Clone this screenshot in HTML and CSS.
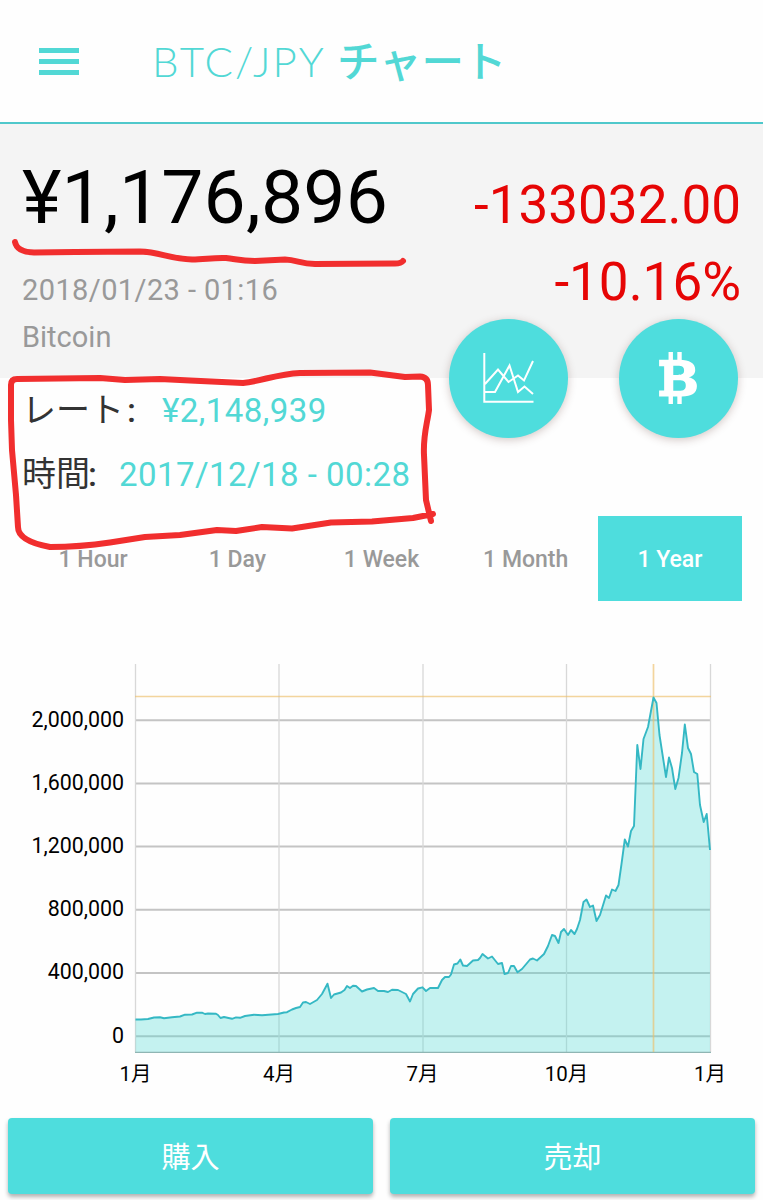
FILE: index.html
```html
<!DOCTYPE html>
<html lang="ja">

<head>
    <meta charset="UTF-8">
    <meta name="viewport" content="width=device-width, initial-scale=1.0">
    <title>BTC/JPY チャート</title>
    <link rel="stylesheet" href="styles.css">
</head>

<body>

    <header class="header">
        <div class="menu">
            <span></span>
            <span></span>
            <span></span>
        </div>
        <h1 class="title"><span class="pair">BTC/JPY</span><span class="kana">チャート</span></h1>
    </header>

    <section class="summary">
        <div class="current">
            <div class="price">¥1,176,896</div>
            <div class="info date">2018/01/23 - 01:16</div>
            <div class="info">Bitcoin</div>
        </div>
        <div class="change">
            <div>-133032.00</div>
            <div>-10.16%</div>
        </div>
        <div class="actions">
            <div class="circle">
                <svg class="icon-chart" viewBox="0 0 52 52">
                    <path d="M2.3 1V49.7H51.5M3 32L16 17.5L26.5 30L36 23.5L42 28.5L51 9M2.3 40H13L27.5 13.5L36 40L42.5 34.5L51 42" />
                </svg>
            </div>
            <div class="circle">
                <svg class="icon-btc" viewBox="0 0 112 154">
                    <path fill-rule="evenodd" d="M0 23H60C91 23 107 34 107 53C107 66 98 72 88 75C102 79 112 87 112 101C112 122 96 132 68 132H0V114H15V42H0ZM42 41V68H54C70 68 74 64 74 55C74 45 69 41 54 41ZM42 84V115H58C74 115 79 110 79 99C79 88 73 84 58 84Z" />
                    <path d="M28 0H41V24H28ZM54 0H67V24H54ZM28 130H41V154H28ZM54 130H67V154H54Z" />
                </svg>
            </div>
        </div>
    </section>

    <section class="rates">
        <div class="rate"><span class="label">レート<i>:</i></span><span class="value">¥2,148,939</span></div>
        <div class="rate time"><span class="label">時間<i>:</i></span><span class="value">2017/12/18 - 00:28</span></div>
    </section>

    <nav class="tabs">
        <div class="tab">1 Hour</div>
        <div class="tab">1 Day</div>
        <div class="tab">1 Week</div>
        <div class="tab">1 Month</div>
        <div class="tab active">1 Year</div>
    </nav>

    <svg class="chart" viewBox="0 650 763 450">
        <path class="grid" d="M135 720.2H710M135 783.5H710M135 846.6H710M135 909.8H710M135 973H710M135 1036.3H710" />
        <path class="grid-v" d="M135.5 664V1052M279 664V1052M423 664V1052M566.5 664V1052M710.5 664V1052" />
        <path class="area" id="area" />
        <path class="axis" d="M135 1052.3H711" />
        <path class="cross" d="M135 696.5H711M653.5 664V1052" />
        <path class="line" id="line" />
        <g class="y-labels">
            <text x="124" y="727">2,000,000</text>
            <text x="124" y="790">1,600,000</text>
            <text x="124" y="853">1,200,000</text>
            <text x="124" y="916">800,000</text>
            <text x="124" y="979">400,000</text>
            <text x="124" y="1043">0</text>
        </g>
        <g class="x-labels">
            <text x="135.5" y="1081">1月</text>
            <text x="279" y="1081">4月</text>
            <text x="422.5" y="1081">7月</text>
            <text x="566.5" y="1081">10月</text>
            <text x="710" y="1081">1月</text>
        </g>
    </svg>

    <div class="buttons">
        <div class="btn">購入</div>
        <div class="btn">売却</div>
    </div>

    <!-- red marker strokes -->
    <svg class="marker" viewBox="0 0 763 1200">
        <path d="M15 242Q17 252 34 252.5L75 252L140 251.5C160 252 170 259 192 259.5C205 259.5 212 257.5 226 258C236 259 240 261 255 261L285 259.5C297 260 300 263.5 315 264L395 263.5Q401 263.5 403 261" />
        <path d="M433 514L413 518L372 521.5L331 522.5L292 528.5L262 527L236 531L217 530L180 535L145 537L110 542.5Q80 547 50 547Q18 541 18 527L16 495L12 450L11 420V385Q11 379 17 379L100 378L125 380L160 379L190 380.5L243 383C262 381 277 374 300 373L370 372.5L405 377L420 376.5Q428 377 428 385L429 410C427 425 423 435 424 455L426 500L431 521" />
    </svg>

    <script>
        let points = [
            [135.5, 1019.5], [141, 1019.5], [148, 1019], [154, 1017.5], [160, 1017.3], [164, 1018.2], [172, 1017.3], [180, 1016.5], [185, 1014.7], [192, 1014.5],
            [197, 1012.7], [202, 1012.7], [205, 1014], [208, 1013.5], [216, 1013.8], [218, 1015], [220.5, 1018], [224, 1017], [232, 1018.8], [236, 1017.4],
            [240, 1017.8], [245, 1016], [254, 1014.8], [262, 1015.2], [278, 1014], [284, 1012.5], [287, 1012.2], [292, 1009.5], [296, 1008], [300, 1007],
            [303, 1002.5], [306, 1002], [310, 1004], [317, 1000], [322, 994], [327.5, 983.7], [331, 998], [334, 994.5], [341, 992.5], [344.5, 990],
            [347, 986], [350, 988], [353, 985.7], [356, 986], [362, 991.5], [367, 989.5], [374, 988], [378, 991], [384, 991], [388, 992],
            [392, 989.7], [398, 990], [406, 994], [410, 1001.5], [413, 994], [418, 988.5], [422.5, 987.3], [426, 991], [430, 988], [438, 988],
            [442, 980], [445, 977], [449, 977], [451, 974.5], [454, 964.5], [457.5, 963.5], [460.3, 959.5], [463, 965.5], [467, 966], [473, 960.5],
            [478, 960], [480, 958], [482.5, 954], [488, 958.5], [492, 956.5], [498, 964], [502, 963], [504.5, 974], [508, 973], [511, 966],
            [514, 966], [517.5, 972.3], [522, 969], [530, 959.5], [533, 958.5], [537, 960.5], [544, 954], [548, 946], [552, 935], [555, 936],
            [558.5, 943], [561, 932], [564, 929], [568, 935], [571, 930], [574.5, 934], [577, 929], [580, 920], [583.5, 902], [586.5, 899.5],
            [590, 907], [593, 905.5], [596.5, 921], [600, 915], [606, 895.5], [609, 898], [612, 889.5], [615.5, 891], [618.5, 885], [621.5, 864],
            [624.8, 839.5], [628, 846.5], [631, 831], [634, 826], [637.3, 745], [640.5, 769], [643.5, 739], [648, 727], [653.5, 697.5], [656.5, 703],
            [659.5, 735], [666, 777], [669, 757.5], [672, 768], [675.3, 789], [678.5, 778], [682, 753], [684.8, 724.5], [688, 748], [691, 754],
            [694, 772], [697.3, 774], [700, 805], [703.7, 822], [706.7, 814], [710, 850]
        ]
        let d = "M" + points.map((p) => p.join(" ")).join("L")
        document.querySelector("#line").setAttribute("d", d)
        document.querySelector("#area").setAttribute("d", d + "V1052H135.5Z")
    </script>
</body>

</html>
```
FILE: styles.css
```css
* {
    box-sizing: border-box;
}

body {
    margin: 0;
    height: 1200px;
    overflow: hidden;
    position: relative;
    background-color: #fefefe;
    font-family: Roboto, "Noto Sans CJK JP", sans-serif;
}

.header {
    display: flex;
    align-items: center;
    height: 124px;
    padding-left: 39px;
    border-bottom: 2px solid #4fc8cb;
}

.menu {
    display: flex;
    flex-direction: column;
    gap: 6px;
    width: 40px;
    padding-top: 1px;
}

.menu span {
    height: 5px;
    background-color: #52d8d5;
}

.title {
    display: flex;
    align-items: baseline;
    margin: 0 0 0 73px;
    padding-bottom: 2px;
    line-height: 60px;
    font-weight: 300;
    color: #52d8d5;
}

.pair {
    width: 185px;
    font-family: Lato, sans-serif;
    font-size: 42px;
    font-weight: 300;
    letter-spacing: 2.2px;
    white-space: nowrap;
}

.kana {
    font-family: "Noto Sans CJK JP", sans-serif;
    font-size: 42.5px;
    font-weight: 500;
}

.summary {
    position: relative;
    display: flex;
    justify-content: space-between;
    height: 254px;
    padding: 0 22px;
    background-color: #f4f4f4;
}

.current {
    padding-top: 29px;
}

.price {
    margin-bottom: 26px;
    font-size: 75px;
    line-height: 88px;
    letter-spacing: 0.2px;
    color: #000;
}

.info {
    font-size: 29px;
    line-height: 47px;
    color: #999;
}

.date {
    letter-spacing: 0.4px;
}

.change {
    padding-top: 43px;
    font-size: 53px;
    line-height: 77px;
    text-align: right;
    color: #e60505;
}

/* round buttons hang over the edge of the summary */
.actions {
    position: absolute;
    right: 25px;
    bottom: -60px;
    display: flex;
    gap: 51px;
}

.circle {
    display: flex;
    align-items: center;
    justify-content: center;
    width: 119px;
    height: 119px;
    border-radius: 50%;
    background-color: #4edddd;
    box-shadow: 0 2px 9px rgba(80, 40, 30, 0.25);
}

.icon-chart {
    width: 52px;
    height: 52px;
    margin-right: 1px;
    margin-bottom: 2px;
    fill: none;
    stroke: #fff;
    stroke-width: 2;
}

.icon-btc {
    width: 38px;
    height: 52px;
    margin-right: 1px;
    margin-bottom: 1px;
    fill: #fff;
}

.rates {
    height: 138px;
    padding: 0 22px;
}

.rate {
    display: flex;
    align-items: baseline;
    height: 64px;
    line-height: 64px;
    font-size: 33px;
}

.label {
    width: 140px;
    font-size: 34px;
    color: #333;
}

.label i {
    margin-left: 3px;
    font-style: normal;
    font-weight: 500;
}

.time .label {
    width: 97px;
}

.time .label i {
    margin-left: -2px;
}

.value {
    letter-spacing: 0.45px;
    color: #52d8d5;
}

.tabs {
    display: flex;
    height: 85px;
    padding: 0 21px;
}

.tab {
    flex: 1;
    line-height: 88px;
    text-align: center;
    font-size: 23px;
    font-weight: 500;
    color: #999;
}

.active {
    color: #fff;
    background-color: #4edddd;
}

.chart {
    display: block;
    width: 763px;
    height: 450px;
    margin-top: 49px;
    font-size: 21.4px;
}

.grid {
    stroke: #c4c4c4;
    stroke-width: 2;
}

.grid-v {
    stroke: #d8d8d8;
    stroke-width: 1.3;
}

.axis {
    stroke: #8fb5b3;
    stroke-width: 1.2;
}

.area {
    fill: rgba(78, 218, 213, 0.33);
}

.line {
    fill: none;
    stroke: #35b8c4;
    stroke-width: 1.9;
    stroke-linejoin: round;
}

.cross {
    stroke: #eec06a;
    stroke-width: 1.7;
    opacity: 0.65;
}

.y-labels {
    text-anchor: end;
}

.x-labels {
    text-anchor: middle;
    font-size: 20.5px;
}

.buttons {
    display: flex;
    gap: 17px;
    padding: 18px 8px 0;
}

.btn {
    flex: 1;
    height: 76px;
    line-height: 80px;
    border-radius: 4px;
    text-align: center;
    font-size: 29px;
    color: #fff;
    background-color: #4edddd;
    box-shadow: 0 3px 4px rgba(0, 0, 0, 0.3);
}

.marker {
    position: absolute;
    top: 0;
    left: 0;
    width: 763px;
    height: 1200px;
    fill: none;
    stroke: #f12e2e;
    stroke-width: 6;
    stroke-linecap: round;
    stroke-linejoin: round;
}
```
